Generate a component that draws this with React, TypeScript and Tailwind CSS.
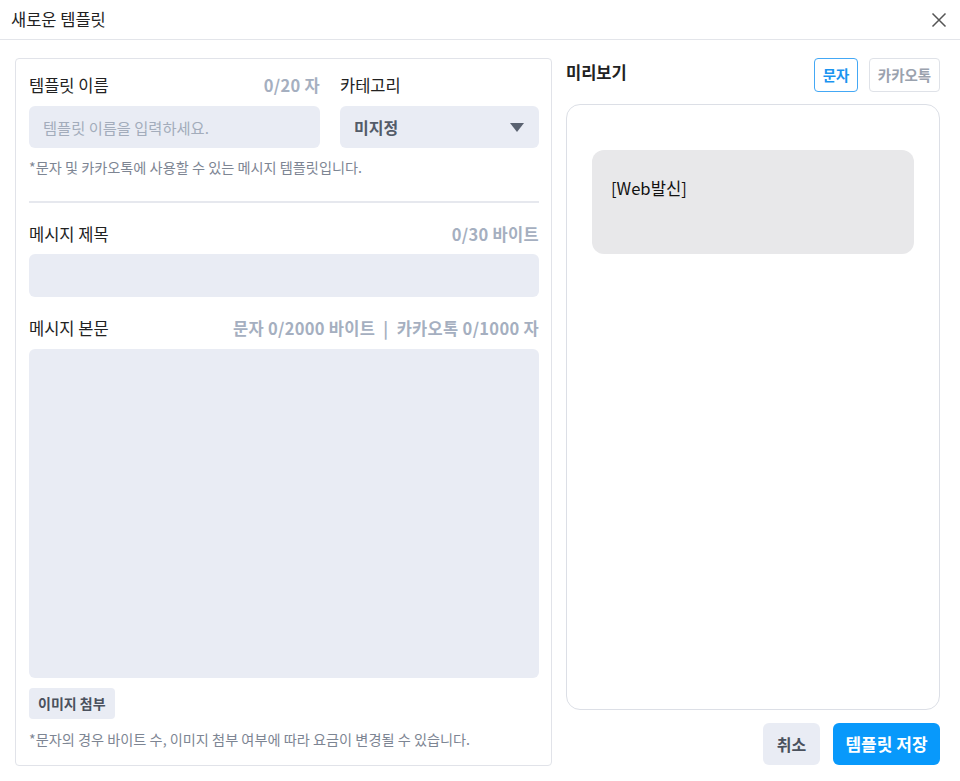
import React from "react";

export default function App() {
  const font = { fontFamily: '"Noto Sans CJK KR", "Noto Sans", sans-serif' };
  return (
    <div className="w-[960px] h-[781px] bg-white text-[#222]" style={font}>
      <div className="h-[40px] border-b border-[#e3e5ea] flex items-center justify-between pl-[11px] pr-[13px]">
        <div className="text-[16.5px] text-[#222]">새로운 템플릿</div>
        <svg width="16" height="16" viewBox="0 0 16 16" fill="none" stroke="#555" strokeWidth="1.5">
          <path d="M1.5 1.5 L14.5 14.5 M14.5 1.5 L1.5 14.5" />
        </svg>
      </div>
      <div className="flex pt-[18px] pl-[15px] gap-[14px]">
        <div className="w-[537px] h-[708px] border border-[#e1e3e9] rounded-[4px] pl-[13px] pr-[12px] pt-[16px] flex flex-col">
          <div className="flex gap-[20px]">
            <div className="w-[291px] flex flex-col">
              <div className="h-5 flex items-center justify-between">
                <span className="text-[16.5px]">템플릿 이름</span>
                <span className="text-[16.5px] font-semibold text-[#a5afc0] tracking-[0.3px]">0/20 자</span>
              </div>
              <div className="mt-[11px] h-[42px] rounded-[6px] bg-[#e9ecf4] flex items-center px-[14px] text-[15.3px] text-[#a3acbb]">
                템플릿 이름을 입력하세요.
              </div>
            </div>
            <div className="flex-1 flex flex-col">
              <div className="h-5 flex items-center">
                <span className="text-[16.5px]">카테고리</span>
              </div>
              <div className="mt-[11px] h-[42px] rounded-[6px] bg-[#e9ecf4] flex items-center justify-between pl-[14px] pr-[15px]">
                <span className="text-[16px] font-bold text-[#535b68]">미지정</span>
                <svg width="14" height="9" viewBox="0 0 14 9"><path d="M0 0 H14 L7 9 Z" fill="#5a6270" /></svg>
              </div>
            </div>
          </div>
          <div className="mt-[11px] h-[18px] flex items-center text-[14.2px] text-[#7d8593]">
            *문자 및 카카오톡에 사용할 수 있는 메시지 템플릿입니다.
          </div>
          <div className="mt-[24px] h-[2px] bg-[#e6e8ee]" />
          <div className="mt-[21px] h-5 flex items-center justify-between">
            <span className="text-[16.5px]">메시지 제목</span>
            <span className="text-[16.5px] font-semibold text-[#a5afc0] tracking-[0.3px]">0/30 바이트</span>
          </div>
          <div className="mt-[10px] h-[43px] rounded-[6px] bg-[#e9ecf4]" />
          <div className="mt-[21px] h-5 flex items-center justify-between">
            <span className="text-[16.5px]">메시지 본문</span>
            <span className="text-[16.5px] font-semibold text-[#a5afc0] whitespace-pre tracking-[0.3px]">문자 0/2000 바이트  |  카카오톡 0/1000 자</span>
          </div>
          <div className="mt-[11px] h-[329px] rounded-[6px] bg-[#e9ecf4]" />
          <div className="mt-[10px] flex">
            <div className="h-[31px] px-[9px] rounded-[4px] bg-[#e9ecf4] flex items-center text-[14px] font-bold text-[#4a515d]">
              이미지 첨부
            </div>
          </div>
          <div className="mt-[12px] h-[18px] flex items-center text-[14.2px] text-[#7d8593]">
            *문자의 경우 바이트 수, 이미지 첨부 여부에 따라 요금이 변경될 수 있습니다.
          </div>
        </div>
        <div className="w-[374px] flex flex-col">
          <div className="h-[34px] flex items-center justify-between">
            <span className="text-[16.5px] font-semibold text-[#222] -mt-[6px]">미리보기</span>
            <div className="flex gap-[11px]">
              <div className="h-[34px] w-[44px] rounded-[4px] border border-[#44a8f5] flex items-center justify-center text-[14.5px] font-bold text-[#1a94f0]">문자</div>
              <div className="h-[34px] w-[71px] rounded-[4px] border border-[#dfe2e8] flex items-center justify-center text-[14.5px] font-bold text-[#9aa2ae]">카카오톡</div>
            </div>
          </div>
          <div className="mt-[12px] h-[606px] rounded-[14px] border border-[#dcdfe6] px-[25px] pt-[45px]">
            <div className="h-[104px] rounded-[12px] bg-[#e8e8ea] px-[19px] pt-[26px] text-[16.6px] leading-[24px] text-[#111]">
              [Web발신]
            </div>
          </div>
          <div className="mt-[13px] flex justify-end gap-[13px]">
            <div className="h-[42px] w-[57px] rounded-[6px] bg-[#e9ecf4] flex items-center justify-center text-[16px] font-bold text-[#4a515d]">취소</div>
            <div className="h-[42px] w-[107px] rounded-[6px] bg-[#0899fb] flex items-center justify-center text-[17px] font-bold text-white">템플릿 저장</div>
          </div>
        </div>
      </div>
    </div>
  );
}
